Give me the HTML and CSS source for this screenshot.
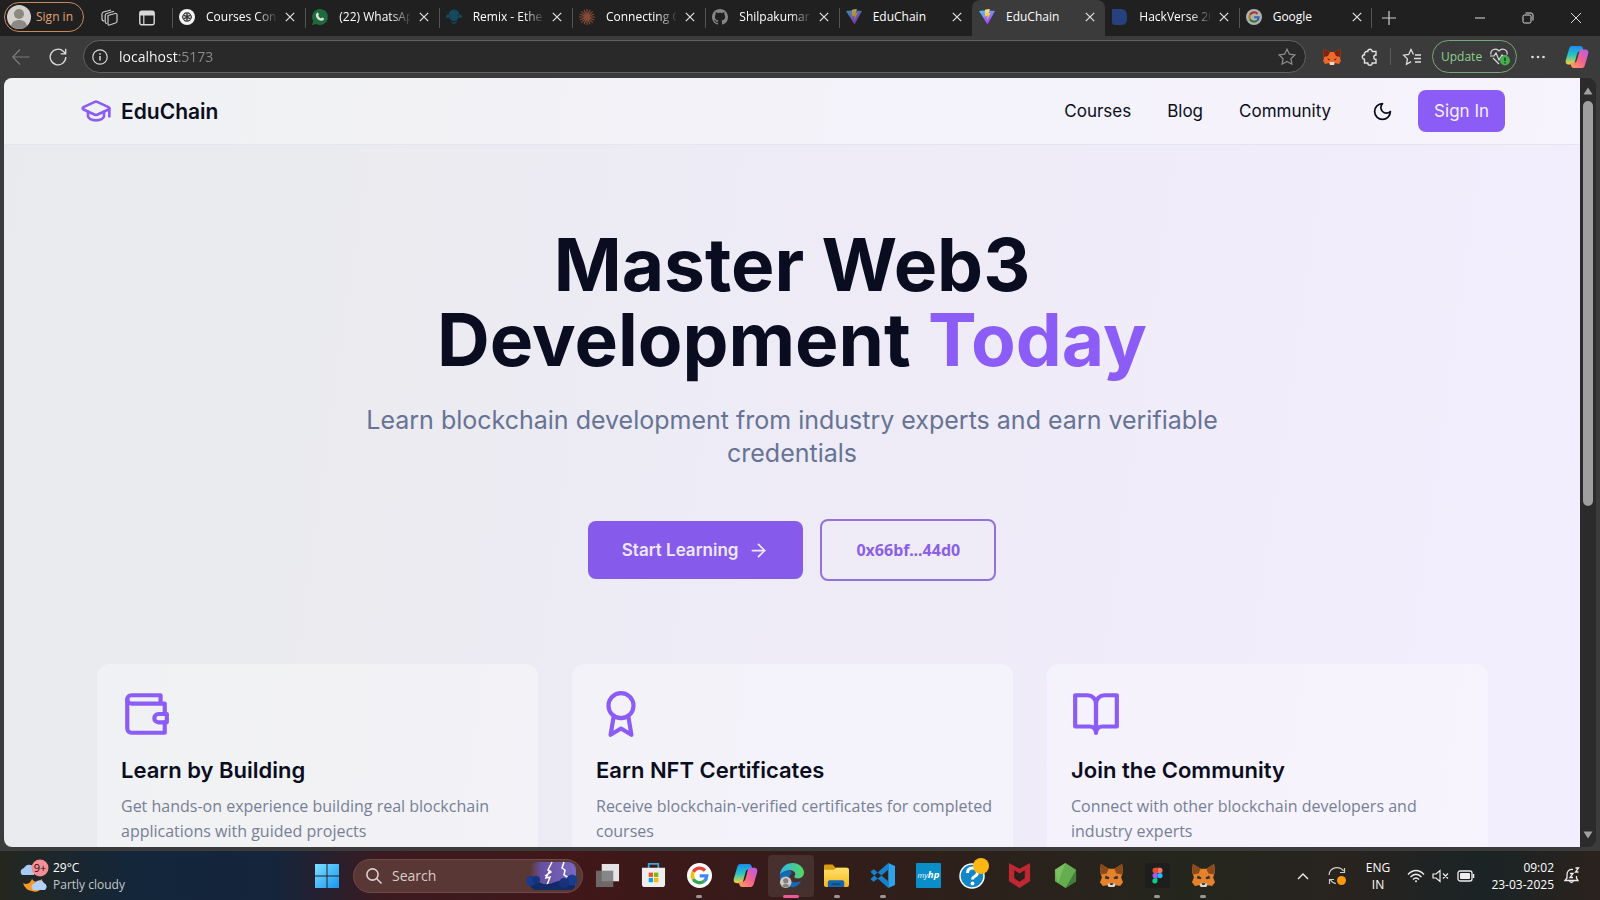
FILE: index.html
```html
<!DOCTYPE html>
<html lang="en">
<head>
<meta charset="utf-8">
<title>EduChain</title>
<link rel="stylesheet" href="styles.css">
</head>
<body>
<svg class="defs" aria-hidden="true">
  <defs>
    <linearGradient id="g-vite" x1="0" y1="0" x2="0.6" y2="1"><stop offset="0" stop-color="#41d1ff"/><stop offset="1" stop-color="#bd34fe"/></linearGradient>
    <linearGradient id="g-bolt" x1="0" y1="0" x2="0" y2="1"><stop offset="0" stop-color="#ffea83"/><stop offset="1" stop-color="#ffa800"/></linearGradient>
    <linearGradient id="g-cop1" x1="0" y1="0" x2="0" y2="1"><stop offset="0" stop-color="#1b8cf0"/><stop offset=".5" stop-color="#27c5c0"/><stop offset="1" stop-color="#ffd02f"/></linearGradient>
    <linearGradient id="g-cop2" x1="1" y1="0" x2="0" y2="1"><stop offset="0" stop-color="#b35cf0"/><stop offset=".5" stop-color="#f4618c"/><stop offset="1" stop-color="#ffa45c"/></linearGradient>
    <linearGradient id="g-win" x1="0" y1="0" x2="1" y2="1"><stop offset="0" stop-color="#7fe0ff"/><stop offset="1" stop-color="#1496f0"/></linearGradient>
    <linearGradient id="g-edge" x1="0" y1="0" x2="1" y2="0"><stop offset="0" stop-color="#2fb4ee"/><stop offset="1" stop-color="#55d860"/></linearGradient>
    <linearGradient id="g-storm" x1="0" y1="0" x2="1" y2="0"><stop offset="0" stop-color="#6f54a0" stop-opacity="0"/><stop offset=".25" stop-color="#6650a4"/><stop offset="1" stop-color="#7a68c0"/></linearGradient>
    <linearGradient id="g-folder" x1="0" y1="0" x2="0" y2="1"><stop offset="0" stop-color="#ffe06a"/><stop offset="1" stop-color="#f5b81f"/></linearGradient>
    <symbol id="close" viewBox="0 0 10 10"><path d="M.8.8l8.400 8.400M9.200.8L.8 9.200" stroke="currentColor" stroke-width="1.200" fill="none"/></symbol>
    <symbol id="vite" viewBox="0 0 16 16"><path d="M0 2l7.500-.8L16 2 8.500 15.500z" fill="url(#g-vite)"/><path d="M6 .8l5-1-1.600 4.400 2.100-.3-3.400 7.600.5-4.500-2.800.5z" fill="url(#g-bolt)"/></symbol>
    <symbol id="google" viewBox="0 0 24 24"><circle cx="12" cy="12" r="12" fill="#fff"/><g fill="none" stroke-width="3.200"><path d="M17.300 7.200A7 7 0 0 0 6 8.600" stroke="#ea4335"/><path d="M6 8.600a7 7 0 0 0 0 6.800" stroke="#fbbc05"/><path d="M6 15.400a7 7 0 0 0 10.600 1.900" stroke="#34a853"/><path d="M16.600 17.300A7 7 0 0 0 19 12.300h-6.800" stroke="#4285f4"/></g></symbol>
    <symbol id="fox" viewBox="0 0 26 26"><path d="M2 1l8 5h6l8-5 1 8-2 6 2 5-3 4-6-1-1 2h-4l-1-2-6 1-3-4 2-5-2-6z" fill="#e8822a"/><path d="M2 1l8 5-2 5-6 1-1-3zM24 1l-8 5 2 5 6 1 1-3z" fill="#8a4a1c"/><path d="M7 13l4 2-1 2-4-1zM19 13l-4 2 1 2 4-1z" fill="#2d3440"/><path d="M10 21h6l1 2-1 2h-6l-1-2z" fill="#ded6cc"/><path d="M11 21h4l-1 2h-2z" fill="#23272f"/></symbol>
    <symbol id="copilot" viewBox="0 0 24 24"><path d="M7 1h8c2 0 2.500 1 3 2.500L18.500 6h-3c-2 0-3 1-3.500 3l-2.200 8c-.5 2-1.300 2.500-3 2.500H4c-3 0-4-2-3-5L4 4c.6-2 1.400-3 3-3z" fill="url(#g-cop1)"/><path d="M17 23H9c-2 0-2.500-1-3-2.500L5.500 18h3c2 0 3-1 3.500-3l2.200-8c.5-2 1.300-2.500 3-2.500H20c3 0 4 2 3 5L20 20c-.6 2-1.400 3-3 3z" fill="url(#g-cop2)"/></symbol>
  </defs>
</svg>

<header class="tabstrip">
  <button class="profile"><svg viewBox="0 0 24 24"><circle cx="12" cy="12" r="12" fill="#d4d0cc"/><circle cx="12" cy="9" r="5" fill="#8c8884"/><path d="M4 21c1-8 15-8 16 0-4 4-12 4-16 0z" fill="#8c8884"/></svg><span>Sign in</span></button>
  <button class="strip-btn" aria-label="Workspaces"><svg viewBox="0 0 18 18" fill="none" stroke="#c8c8c8" stroke-width="1.200"><path d="M7 6.500l7-2q2-.5 2 1.500v6q0 1.500-1.500 2l-6 2Q7 16.500 7 15z"/><path d="M6 14.500q-1.800 0-1.800-1.700V6.500q0-1.500 1.500-2L13 2.300"/><path d="M3.500 12Q1 12 1 10V5q0-1.500 1.500-2L10 1"/></svg></button>
  <button class="strip-btn" aria-label="Tab actions"><svg viewBox="0 0 18 18"><rect x="1.800" y="2.300" width="14.400" height="13.400" rx="2" fill="none" stroke="#d8d8d8" stroke-width="1.400"/><path d="M2 3h14v3.500H2z" fill="#d8d8d8"/><path d="M5.800 6v9.500" stroke="#d8d8d8" stroke-width="1.200"/></svg></button>
  <nav class="tabs">
    <div class="tab"><svg class="fav" viewBox="0 0 16 16"><circle cx="8" cy="8" r="8" fill="#f4f4f4"/><g fill="none" stroke="#333" stroke-width=".8"><ellipse cx="8" cy="5.800" rx="3" ry="2.200"/><ellipse cx="8" cy="5.800" rx="3" ry="2.200" transform="rotate(60 8 8)"/><ellipse cx="8" cy="5.800" rx="3" ry="2.200" transform="rotate(120 8 8)"/><ellipse cx="8" cy="5.800" rx="3" ry="2.200" transform="rotate(180 8 8)"/><ellipse cx="8" cy="5.800" rx="3" ry="2.200" transform="rotate(240 8 8)"/><ellipse cx="8" cy="5.800" rx="3" ry="2.200" transform="rotate(300 8 8)"/></g></svg><span class="title fade">Courses Con</span><button class="x" aria-label="Close"><svg><use href="#close"/></svg></button></div>
    <div class="tab"><svg class="fav" viewBox="0 0 16 16"><path d="M8 0a8 8 0 1 1-3.700 15.100L0 16l1.200-4A8 8 0 0 1 8 0z" fill="#1d6b3a"/><path d="M5 3.800q1-.6 1.500.8l.4 1.100q-.8.8-.5 1.200 1 1.800 2.700 2.500l1-.9q1.800.6 2 1.200-.3 2.500-3 2.100Q5 11 3.900 7 3.500 5 5 3.800z" fill="#ddd"/></svg><span class="title fade">(22) WhatsAp</span><button class="x" aria-label="Close"><svg><use href="#close"/></svg></button></div>
    <div class="tab"><svg class="fav" viewBox="0 0 16 16" fill="#144a5c"><path d="M2.500 6a5.500 5.500 0 0 1 11 0L8 4.500z"/><circle cx="8" cy="7.500" r="4.700"/><circle cx="1.700" cy="7.300" r="1.700"/><circle cx="14.300" cy="7.300" r="1.700"/><path d="M4 12l4 1.500L12 12l-4 3.500z"/></svg><span class="title fade">Remix - Ethe</span><button class="x" aria-label="Close"><svg><use href="#close"/></svg></button></div>
    <div class="tab"><svg class="fav" viewBox="0 0 16 16" stroke="#864a36" stroke-width="1.200"><path d="M8 0v16M0 8h16M2.300 2.300l11.400 11.400M13.700 2.300L2.300 13.700M5 .7l6 14.600M11 .7L5 15.300M.7 5l14.600 6M15.300 5L.7 11"/></svg><span class="title fade">Connecting C</span><button class="x" aria-label="Close"><svg><use href="#close"/></svg></button></div>
    <div class="tab"><svg class="fav" viewBox="0 0 16 16"><path fill="#858585" d="M8 0C3.580 0 0 3.580 0 8c0 3.540 2.290 6.530 5.470 7.590.4.070.55-.17.55-.38 0-.19-.01-.82-.01-1.490-2.010.37-2.530-.49-2.690-.94-.09-.23-.48-.94-.82-1.130-.28-.15-.68-.52-.01-.53.63-.01 1.080.58 1.230.82.720 1.210 1.870.87 2.330.66.070-.52.280-.87.510-1.070-1.780-.2-3.640-.89-3.640-3.950 0-.87.310-1.590.82-2.150-.08-.2-.36-1.020.08-2.120 0 0 .67-.21 2.200.82.640-.18 1.320-.27 2-.27s1.360.09 2 .27c1.530-1.040 2.200-.82 2.200-.82.440 1.100.16 1.920.08 2.120.51.560.82 1.270.82 2.150 0 3.070-1.870 3.750-3.650 3.950.29.25.54.73.54 1.480 0 1.070-.01 1.930-.01 2.200 0 .21.150.46.55.38A8.010 8.010 0 0 0 16 8c0-4.420-3.580-8-8-8z"/></svg><span class="title fade">Shilpakumari</span><button class="x" aria-label="Close"><svg><use href="#close"/></svg></button></div>
    <div class="tab"><svg class="fav dim"><use href="#vite"/></svg><span class="title">EduChain</span><button class="x" aria-label="Close"><svg><use href="#close"/></svg></button></div>
    <div class="tab active"><svg class="fav"><use href="#vite"/></svg><span class="title">EduChain</span><button class="x" aria-label="Close"><svg><use href="#close"/></svg></button></div>
    <div class="tab bare"><svg class="fav" viewBox="0 0 16 16"><path d="M0 0h10q5 1 5 7v3q0 6-6 6H3q-3 0-3-3z" fill="#27407e"/></svg><span class="title fade">HackVerse 20</span><button class="x" aria-label="Close"><svg><use href="#close"/></svg></button></div>
    <div class="tab"><svg class="fav dim"><use href="#google"/></svg><span class="title">Google</span><button class="x" aria-label="Close"><svg><use href="#close"/></svg></button></div>
  </nav>
  <button class="newtab" aria-label="New tab"><svg viewBox="0 0 14 14"><path d="M7 0v14M0 7h14" stroke="#d0d0d0" stroke-width="1.200"/></svg></button>
  <div class="winctl">
    <button aria-label="Minimise"><svg viewBox="0 0 12 12"><path d="M1 6h10" stroke="#ddd"/></svg></button>
    <button aria-label="Restore"><svg viewBox="0 0 12 12" fill="none" stroke="#ddd"><rect x="1" y="3" width="8" height="8" rx="1.500"/><path d="M3.500 1H9q2 0 2 2v5.500"/></svg></button>
    <button aria-label="Close window"><svg viewBox="0 0 12 12"><path d="M1 1l10 10M11 1L1 11" stroke="#ddd"/></svg></button>
  </div>
</header>

<div class="toolbar">
  <button class="tool back" aria-label="Back"><svg viewBox="0 0 18 18" fill="none" stroke="#7c7c7c" stroke-width="1.200"><path d="M17.500 9H1M8 1.500L.8 9 8 16.500"/></svg></button>
  <button class="tool" aria-label="Reload"><svg viewBox="0 0 18 18" fill="none" stroke="#dcdcdc" stroke-width="1.300"><path d="M16.800 9A7.800 7.800 0 1 1 14.500 3.500l2 2M16.700.8v5h-5"/></svg></button>
  <div class="address">
    <svg class="info" viewBox="0 0 16 16" fill="none" stroke="#d8d8d8" stroke-width="1.200"><circle cx="8" cy="8" r="7.200"/><path d="M8 7v4.500M8 4.200v1.500" stroke-width="1.500"/></svg>
    <input type="text" aria-label="Address" value="localhost:5173">
    <svg class="star" viewBox="0 0 18 18" fill="none" stroke="#8e8e8e" stroke-width="1.200"><path d="M9 1.200l2.400 5 5.500.7-4 3.800 1 5.500L9 13.500l-4.900 2.700 1-5.500-4-3.800 5.500-.7z"/></svg>
  </div>
  <button class="tool ext" aria-label="MetaMask"><svg viewBox="0 0 18 16"><path d="M1 0l6 3h4l6-3 .8 5L17 9l.8 3-1.800 3-4-1-1 2H7l-1-2-4 1L.2 12 1 9 .2 5z" fill="#ee6a2b"/><path d="M1 0l6 3-2 4-4 1-.8-3zM17 0l-6 3 2 4 4 1 .8-3z" fill="#7c2410"/><path d="M4 9l3 1.500-1 1zM14 9l-3 1.500 1 1z" fill="#2c1a2e"/><path d="M6.500 13h5L11 16H7z" fill="#f2d8c8"/></svg></button>
  <button class="tool ext" aria-label="Extensions"><svg viewBox="0 0 18 18" fill="none" stroke="#e0e0e0" stroke-width="1.400"><path d="M5 3.500h1.800a2.200 2.200 0 0 1 4.400 0H15V7a2.200 2.200 0 0 0 0 4.400V15h-3.800a2.200 2.200 0 0 1-4.400 0H3.500v-3.800a2.200 2.200 0 0 1 0-4.400V5z"/></svg></button>
  <span class="divider"></span>
  <button class="tool ext" aria-label="Favourites"><svg viewBox="0 0 18 18" fill="none" stroke="#e0e0e0" stroke-width="1.300"><path d="M10.500 6.500L8 1.500l-2.300 5-5 .7 3.700 3.700-.9 5.300L8 13.600M12 7h6M11 10.500h7M12 14h6"/></svg></button>
  <button class="update"><span>Update</span><svg viewBox="0 0 20 18"><g fill="none" stroke="#dcdcdc" stroke-width="1.200"><path d="M1 6.500C0 2 6-1 9 3c3-4 9-1 8 3.500M3 10l6 6"/><path d="M0 8h4l2-3 3 7 3-5 1 1h4"/></g><circle cx="15" cy="12.500" r="5" fill="#45b04a"/><path d="M15 9.500v3.500M15 14.200v1.300" stroke="#123" stroke-width="1.300"/></svg></button>
  <button class="tool dots" aria-label="Settings"><svg viewBox="0 0 14 4" fill="#e0e0e0"><circle cx="1.500" cy="2" r="1.300"/><circle cx="7" cy="2" r="1.300"/><circle cx="12.500" cy="2" r="1.300"/></svg></button>
  <button class="tool copilot" aria-label="Copilot"><svg><use href="#copilot"/></svg></button>
</div>

<div class="viewport">
  <div class="page">
    <header class="site-header">
      <a class="brand" href="#"><svg class="line" viewBox="0 0 24 24"><path d="M21.420 10.922a1 1 0 0 0-.019-1.838L12.830 5.180a2 2 0 0 0-1.660 0L2.600 9.080a1 1 0 0 0 0 1.832l8.570 3.908a2 2 0 0 0 1.660 0z"/><path d="M22 10v6"/><path d="M6 12.500V16a6 3 0 0 0 12 0v-3.500"/></svg>EduChain</a>
      <nav class="links"><a href="#">Courses</a><a href="#">Blog</a><a href="#">Community</a></nav>
      <button class="theme" aria-label="Toggle theme"><svg class="line" viewBox="0 0 24 24"><path d="M12 3a6 6 0 0 0 9 9 9 9 0 1 1-9-9Z"/></svg></button>
      <button class="signin">Sign In</button>
    </header>
    <main>
      <section class="hero">
        <h1>Master Web3<br>Development <span>Today</span></h1>
        <p>Learn blockchain development from industry experts and earn verifiable credentials</p>
        <div class="actions">
          <button class="primary">Start Learning<svg class="line" viewBox="0 0 24 24"><path d="M5 12h14"/><path d="m12 5 7 7-7 7"/></svg></button>
          <button class="wallet">0x66bf...44d0</button>
        </div>
      </section>
      <section class="cards">
        <article class="card"><svg class="line" viewBox="0 0 24 24"><path d="M21 12V7H5a2 2 0 0 1 0-4h14v4"/><path d="M3 5v14a2 2 0 0 0 2 2h16v-5"/><path d="M18 12a2 2 0 0 0 0 4h4v-4Z"/></svg><h2>Learn by Building</h2><p>Get hands-on experience building real blockchain applications with guided projects</p></article>
        <article class="card"><svg class="line" viewBox="0 0 24 24"><circle cx="12" cy="8" r="6"/><path d="M15.477 12.890 17 22l-5-3-5 3 1.523-9.110"/></svg><h2>Earn NFT Certificates</h2><p>Receive blockchain-verified certificates for completed courses</p></article>
        <article class="card"><svg class="line" viewBox="0 0 24 24"><path d="M2 3h6a4 4 0 0 1 4 4v14a3 3 0 0 0-3-3H2z"/><path d="M22 3h-6a4 4 0 0 0-4 4v14a3 3 0 0 1 3-3h7z"/></svg><h2>Join the Community</h2><p>Connect with other blockchain developers and industry experts</p></article>
      </section>
    </main>
  </div>
  <div class="scrollbar"><svg viewBox="0 0 10 8"><path d="M5 .5L9.500 7.500H.5z" fill="#a0a0a0"/></svg><div class="thumb-track"><div class="thumb"></div></div><svg viewBox="0 0 10 8"><path d="M5 7.500L.5.500h9z" fill="#a0a0a0"/></svg></div>
</div>

<footer class="taskbar">
  <div class="weather"><svg viewBox="0 0 30 34"><path d="M12 20q4 6 10 0l1 6a8 8 0 0 1-11 6q-7-1-9-8 6 3 9-4z" fill="#f39a2b"/><path d="M2 16a4 4 0 0 1 2-7 6 6 0 0 1 10-1v8z" fill="#a9c8f4"/><path d="M13 31a4 4 0 0 1 2-7 5 5 0 0 1 9 0 4 4 0 0 1 1 7z" fill="#b4d0f6"/><circle cx="20" cy="9" r="8.500" fill="#f78d94"/><text x="20" y="13" text-anchor="middle">9+</text></svg><div><div>29°C</div><div class="muted">Partly cloudy</div></div></div>
  <button class="start" aria-label="Start"><svg viewBox="0 0 24 24" fill="url(#g-win)"><path d="M0 0h11.500v11.500H0zM12.500 0H24v11.500H12.500zM0 12.500h11.500V24H0zM12.500 12.500H24V24H12.500z"/></svg></button>
  <label class="search"><svg class="lens" viewBox="0 0 16 16" fill="none" stroke="#d8cfcf" stroke-width="1.600"><circle cx="6.500" cy="6.500" r="5.600"/><path d="M10.500 10.500l5 5"/></svg><input type="search" aria-label="Search" placeholder="Search"><svg class="storm" viewBox="0 0 54 30"><rect x="5" y="1" width="46" height="28" rx="8" fill="url(#g-storm)"/><path d="M27 1l-4 8 3 2-6 4M25 9l-4 8 4-1-3 8M39 1l-2 6 3 2-1 5 5 3" stroke="#fff" stroke-width="1.500" fill="none"/><path d="M4 22q7-3 12 0t14-1 20 1q1 4-3 7H10q-5-2-6-7z" fill="#122a66"/><circle cx="6" cy="20" r="5" fill="#1b3c8c"/><circle cx="11" cy="19" r="4" fill="#16337c"/><circle cx="47" cy="19" r="5.500" fill="#1b3c8c"/><circle cx="39" cy="22" r="5" fill="#16337c"/></svg></label>
  <div class="apps">
    <button aria-label="Task view"><svg viewBox="0 0 26 26"><path d="M7 1h18v18H7z" fill="#e4e4e4"/><path d="M1 8h18v17H1z" fill="#777" opacity=".85"/></svg></button>
    <button aria-label="Store"><svg viewBox="0 0 26 26"><path d="M8 6V1h10v5" fill="none" stroke="#3aa4dc" stroke-width="1.800"/><path d="M1 5h24v17q0 3-3 3H4q-3 0-3-3z" fill="#eee"/><path d="M8 10h4.500v4.500H8z" fill="#f25022"/><path d="M13.500 10H18v4.500h-4.500z" fill="#7fba00"/><path d="M8 15.500h4.500V20H8z" fill="#00a4ef"/><path d="M13.500 15.500H18V20h-4.500z" fill="#ffb900"/></svg></button>
    <button class="run" aria-label="Google"><svg><use href="#google"/></svg></button>
    <button aria-label="Copilot"><svg><use href="#copilot"/></svg></button>
    <button class="run current" aria-label="Edge"><svg viewBox="0 0 26 26"><path d="M1 12C2 4 8 0 14 0c7 0 12 5 12 10 0 4-3 6-6 6-4 0-5-1-3-4 0-5-8-7-16 0z" fill="url(#g-edge)"/><path d="M1 12c5-6 13-5 12-1-6 5 0 12 10 8-3 5-7 7-11 6C5 25 0 19 1 12z" fill="#1369b4"/><circle cx="7" cy="20" r="6" fill="#cfcac5"/><circle cx="7" cy="18.500" r="2.700" fill="#85807b"/><path d="M3 24q4-5 8 0-4 3-8 0z" fill="#85807b"/></svg></button>
    <button class="run" aria-label="Files"><svg viewBox="0 0 26 26"><path d="M0 3q0-1.500 1.500-1.500H9L12 5h12v8H0z" fill="#d99a12"/><path d="M0 7h10l3-2h11q2 0 2 2v16q0 2-2 2H2q-2 0-2-2z" fill="url(#g-folder)"/><path d="M4 25v-5q0-2 2-2h13q2 0 2 2v5z" fill="#1465ae"/><path d="M8 21h9v2H8z" fill="#0d4a86"/></svg></button>
    <button class="run" aria-label="VS Code"><svg viewBox="0 0 26 26"><path d="M19 0l7 3v20l-7 3z" fill="#2ea2ea"/><path d="M19 0v7L4 19.500 1 17.500V16zM19 26v-7L4 6.500 1 8.500V10z" fill="#1582cd"/></svg></button>
    <button aria-label="myHP"><svg viewBox="0 0 26 26"><rect width="26" height="26" rx="1" fill="#0a8ec9"/><text x="13" y="16" text-anchor="middle" class="hp">my<tspan class="hpb">hp</tspan></text></svg></button>
    <button aria-label="Help"><svg class="help" viewBox="0 0 30 32"><circle cx="13" cy="18" r="12" fill="#1387c6" stroke="#fff" stroke-width="1.500"/><path d="M8.500 15q0-5 5-5t5 4.500q0 2.500-3 4-2 1-2 3" stroke="#fff" stroke-width="3" fill="none"/><circle cx="13.500" cy="25.500" r="1.900" fill="#fff"/><circle cx="22" cy="8" r="8" fill="#fdb714"/></svg></button>
    <button aria-label="McAfee"><svg viewBox="0 0 26 26"><path d="M2 0l11 6 11-6v19l-11 7-11-7z" fill="#bd2833"/><path d="M7.500 7.500L13 11l5.500-3.500v8.300L13 19.500l-5.500-3.700z" fill="#2b1e1b"/></svg></button>
    <button aria-label="Node"><svg viewBox="0 0 26 26"><path d="M13 0l11 7v12l-11 7L2 19V7z" fill="#66ad50"/><path d="M13 0L2 7l3 14z" fill="#7bc163"/><path d="M13 26l11-19v12z" fill="#437f3b"/></svg></button>
    <button aria-label="MetaMask"><svg><use href="#fox"/></svg></button>
    <button class="run" aria-label="Figma"><svg viewBox="0 0 26 26"><rect width="26" height="26" rx="2" fill="#1e1e1e"/><path d="M13 5h-2.500a2.700 2.700 0 0 0 0 5.400H13z" fill="#f24e1e"/><path d="M13 5h2.500a2.700 2.700 0 0 1 0 5.400H13z" fill="#ff7262"/><path d="M13 10.400h-2.500a2.700 2.700 0 0 0 0 5.400H13z" fill="#a259ff"/><circle cx="15.600" cy="13.100" r="2.700" fill="#1abcfe"/><path d="M13 15.800h-2.500a2.700 2.700 0 1 0 2.500 2.700z" fill="#0acf83"/></svg></button>
    <button class="run" aria-label="MetaMask window"><svg><use href="#fox"/></svg></button>
  </div>
  <div class="tray">
    <svg class="chev" viewBox="0 0 12 8"><path d="M1 7l5-5 5 5" fill="none" stroke="#eee" stroke-width="1.400"/></svg>
    <svg class="sync" viewBox="0 0 18 18"><path d="M1 8a8 8 0 0 1 14.500-4M16.500 1v4.500H12M8 16.500q-3 0-5.500-3.500M1.500 17v-4.500H6" fill="none" stroke="#ccc" stroke-width="1.200"/><circle cx="13.500" cy="13.500" r="4.500" fill="#f99a0c"/></svg>
    <div class="lang"><div>ENG</div><div>IN</div></div>
    <svg class="net" viewBox="0 0 18 14" fill="none" stroke="#eee" stroke-width="1.400"><path d="M1 5.500q8-8 16 0M3.500 8q5.500-5.500 11 0M6 10.500q3-3 6 0"/><circle cx="9" cy="12.300" r="1" fill="#eee" stroke="none"/></svg>
    <svg class="vol" viewBox="0 0 18 14" fill="none" stroke="#eee" stroke-width="1.200"><path d="M1 5h3l4-3.500v11L4 9H1zM11 4.500l5 5M16 4.500l-5 5"/></svg>
    <svg class="bat" viewBox="0 0 18 14"><rect x="1" y="2" width="14" height="10" rx="2" fill="none" stroke="#eee" stroke-width="1.300"/><rect x="3" y="4" width="10" height="6" rx="1" fill="#eee"/><path d="M16.500 5v4" stroke="#eee" stroke-width="1.500"/></svg>
    <div class="clock"><div>09:02</div><div>23-03-2025</div></div>
    <svg class="bell" viewBox="0 0 16 17" fill="none" stroke="#eee" stroke-width="1.300"><path d="M9 2.500Q3 2 3 8v3l-2 2.500h13L12.500 11V9M5.500 14q2 3 4 0M6 6.500h3l-3 4h3M11.500 1h3l-3 4h3"/></svg>
  </div>
</footer>
</body>
</html>
```
FILE: styles.css
```css
* { box-sizing: border-box; }
body {
  margin: 0;
  height: 100vh;
  display: flex;
  flex-direction: column;
  overflow: hidden;
  background: #3b3b3b;
  color: #fff;
  font: 12px/16px "Open Sans", "Noto Sans", sans-serif;
}
button { border: 0; padding: 0; background: none; color: inherit; font: inherit; cursor: pointer; }
a { color: inherit; text-decoration: none; }
svg { display: block; flex: none; overflow: visible; }
h1, h2, p { margin: 0; }
.defs { position: absolute; width: 0; height: 0; }

/* Tab strip */
.tabstrip { flex: none; height: 36px; display: flex; align-items: center; background: #202020; padding-left: 4px; }
.profile { display: flex; align-items: center; gap: 5px; height: 30px; width: 80px; margin-bottom: 3px; padding: 0 2px; border: 1px solid #c98a5b; border-radius: 15px; color: #e0a078; white-space: nowrap; }
.profile svg { width: 24px; height: 24px; }
.strip-btn { width: 37px; display: grid; place-items: center; }
.strip-btn:nth-of-type(2) { margin-left: 7px; }
.strip-btn svg { width: 18px; height: 18px; }
.tabs { display: grid; grid-template-columns: repeat(9, 1fr); width: 76%; max-width: 1200px; height: 36px; margin-left: 7px; }
.tab { position: relative; display: flex; align-items: center; padding: 0 10px 3px 7px; min-width: 0; }
.tab::before { content: ""; position: absolute; left: 0; top: 8px; width: 1px; height: 20px; background: #555; }
.tab:last-child::after { content: ""; position: absolute; right: 0; top: 8px; width: 1px; height: 20px; background: #555; }
.tab.active { background: #3b3b3b; border-radius: 8px 8px 0 0; }
.tab.active::before, .tab.bare::before { display: none; }
.fav { width: 16px; height: 16px; }
.fav.dim { opacity: .65; }
.title { flex: 1; margin-left: 11px; margin-right: 9px; overflow: hidden; white-space: nowrap; }
.fade { mask-image: linear-gradient(to right, #000 72%, rgba(0, 0, 0, .1)); }
.x { width: 10px; height: 10px; color: #e4e4e4; }
.x svg { width: 10px; height: 10px; }
.newtab { margin-left: 10px; }
.newtab svg { width: 14px; height: 14px; }
.winctl { margin-left: auto; display: flex; }
.winctl button { width: 48px; display: grid; place-items: center; }
.winctl svg { width: 12px; height: 12px; }

/* Toolbar */
.toolbar { flex: none; height: 42px; display: flex; align-items: center; padding: 0 11px 1px 12px; }
.tool svg { width: 18px; height: 18px; }
.back { margin-right: 19px; }
.address { flex: 1; height: 33px; margin-left: 16px; margin-right: 17px; display: flex; align-items: center; padding: 0 9px 0 8px; border: 1px solid #626262; border-radius: 17px; background: #292929; }
.info { width: 16px; height: 16px; }
.address input { flex: 1; min-width: 0; margin-left: 11px; padding: 0; border: 0; outline: 0; font: 14px/20px "Open Sans", "Noto Sans", sans-serif; background: linear-gradient(to right, #fff 60px, #8c8c8c 60px) text; color: transparent; }
.star { width: 18px; height: 18px; }
.ext { margin-right: 11px; }
.ext + .ext { margin: 0 11px 0 9px; }
.divider { width: 1px; height: 17px; margin-right: 12px; background: #5c5c5c; }
.update { display: flex; align-items: center; justify-content: space-between; width: 85px; height: 33px; padding: 0 6px 0 8px; border: 1px solid #76a877; border-radius: 17px; color: #8fcf90; }
.update svg { width: 20px; height: 18px; }
.dots { margin: 0 20px 0 14px; }
.dots svg { width: 14px; height: 4px; }
.copilot svg { width: 24px; height: 24px; }

/* Web page */
.viewport { flex: 1; min-height: 0; display: flex; margin: 0 4px 4px; border-radius: 8px; overflow: hidden; background: #2b2b2b; }
.page { flex: 1; overflow: hidden; color: #0a0d20; font-family: Inter, sans-serif; background: linear-gradient(98deg, #e8eaed, #ebebf0 26%, #edebf5 42%, #f0ecfa 75%, #f2eefd); }
.line { fill: none; stroke: currentColor; stroke-width: 2; stroke-linecap: round; stroke-linejoin: round; }
.site-header { display: flex; align-items: center; height: 67px; padding: 0 75px 0 76px; background: rgba(255, 255, 255, .34); border-bottom: 1px solid #e3e5ef; font-size: 17px; line-height: 25px; }
.brand { display: flex; align-items: center; gap: 9px; margin-right: auto; font-size: 21px; font-weight: 600; }
.brand svg { width: 32px; height: 32px; color: #8b5cf6; }
.links { display: flex; gap: 36px; }
.theme { margin: 0 25px 0 41px; }
.theme svg { width: 21px; height: 21px; }
.signin { height: 42px; padding: 0 16px; border-radius: 8px; background: #8b5cf6; color: #f4efff; }
.hero { display: flex; flex-direction: column; align-items: center; padding-top: 82px; text-align: center; }
.hero h1 { font-size: 73px; line-height: 75px; font-weight: 700; }
.hero h1 span { color: #8b5cf6; }
.hero p { max-width: 900px; margin-top: 27px; font-size: 25px; line-height: 33px; color: #667394; }
.actions { display: flex; align-items: center; gap: 17px; margin-top: 49px; }
.primary { display: flex; align-items: center; gap: 10px; height: 58px; padding: 0 34px; border-radius: 8px; background: #865aeb; color: #efe8fd; font-size: 17px; font-weight: 600; }
.primary svg { width: 21px; height: 21px; }
.wallet { height: 62px; padding: 0 34px; border: 2px solid #9370da; border-radius: 8px; color: #8b5fe6; font: 700 16px/24px "Noto Sans", sans-serif; }
.cards { display: grid; grid-template-columns: repeat(3, 1fr); gap: 34px; padding: 83px 92px 0 93px; }
.card { height: 260px; padding: 25px 18px 25px 24px; border-radius: 12px; background: rgba(255, 255, 255, .34); }
.card svg { width: 50px; height: 50px; color: #8b5cf6; }
.card h2 { margin-top: 17px; font-size: 22px; line-height: 29px; font-weight: 600; }
.card p { margin-top: 9px; font: 16px/25px "Open Sans", "Noto Sans", sans-serif; color: #758096; }
.scrollbar { width: 16px; display: flex; flex-direction: column; align-items: center; padding: 9px 0 8px; }
.scrollbar svg { width: 10px; height: 8px; }
.thumb-track { flex: 1; width: 10px; padding: 6px 0; }
.thumb { height: 56%; border-radius: 5px; background: #9f9f9f; }

/* Taskbar */
.taskbar { flex: none; height: 49px; display: flex; align-items: center; padding-right: 20px; background: linear-gradient(to right, #25271f 0, #13263a 8%, #14253c 17%, #3b1a1f 24%, #411719 36%, #321d1a 52%, #24261d 74%, #28231f 84%, #1b2325 93%, #2b221d); }
.weather { width: 304px; padding-left: 20px; display: flex; align-items: center; gap: 3px; line-height: 17px; }
.weather svg { width: 30px; height: 34px; }
.weather text { font-size: 11px; fill: #201010; }
.muted { color: #c4c8cc; }
.start { width: 46px; display: grid; place-items: center; }
.start svg { width: 24px; height: 24px; }
.search { width: 230px; height: 34px; margin-left: 3px; display: flex; align-items: center; padding: 0 3px 0 12px; border: 1px solid #6e4a48; border-radius: 17px; background: #593735; }
.lens { width: 16px; height: 16px; }
.search input { flex: 1; min-width: 0; margin-left: 10px; padding: 0; border: 0; outline: 0; background: none; font: 14px/20px "Open Sans", sans-serif; color: #d8cccc; }
.search input::placeholder { color: #d8cccc; opacity: 1; }
.storm { width: 54px; height: 30px; }
.apps { display: grid; grid-template-columns: repeat(14, 1fr); width: 641px; margin-left: 2px; }
.apps button { position: relative; height: 42px; display: grid; place-items: center; }
.apps svg { width: 25px; height: 25px; }
.apps .help { width: 30px; height: 32px; margin-bottom: 4px; }
.run::after { content: ""; position: absolute; left: calc(50% - 3px); bottom: -1px; width: 6px; height: 3px; border-radius: 2px; background: #9c9896; }
.current { border-radius: 4px; background: rgba(255, 255, 255, .09); }
.current::after { left: calc(50% - 8px); width: 16px; background: #ed5a9c; }
.hp { font: italic 8px "Open Sans", sans-serif; fill: #fff; }
.hpb { font-weight: 700; font-size: 10px; }
.tray { margin-left: auto; display: flex; align-items: center; line-height: 17px; }
.chev { width: 12px; height: 8px; }
.sync { width: 18px; height: 18px; margin-left: 19px; }
.lang { width: 34px; margin-left: 15px; text-align: center; }
.net, .vol, .bat { width: 18px; height: 14px; }
.net { margin-left: 12px; }
.vol { margin-left: 7px; }
.bat { margin-left: 7px; }
.clock { width: 72px; margin-left: 7px; text-align: right; white-space: nowrap; }
.bell { width: 16px; height: 17px; margin-left: 10px; }
```
